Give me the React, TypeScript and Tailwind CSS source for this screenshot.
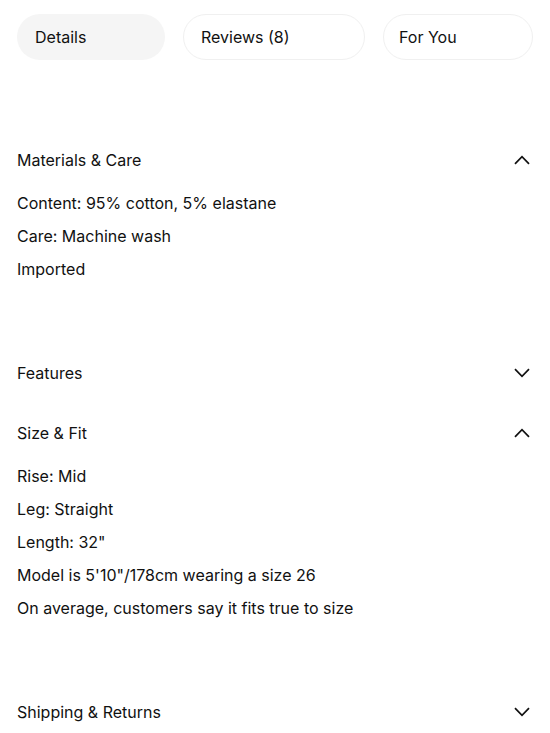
import React from "react";

const Chevron = ({ up }: { up?: boolean }) => (
  <svg width="16" height="10" viewBox="0 0 16 10" fill="none" className="shrink-0">
    {up ? (
      <path d="M1 8.8 L8 1.6 L15 8.8" stroke="#111" strokeWidth="1.7" />
    ) : (
      <path d="M1 1.2 L8 8.4 L15 1.2" stroke="#111" strokeWidth="1.7" />
    )}
  </svg>
);

const Section = ({ title, open, lines }: { title: string; open?: boolean; lines?: string[] }) => (
  <div className="mt-1">
    <div className="h-[56px] flex items-center justify-between pl-[17px] pr-[20px]">
      <span className="text-[16px]">{title}</span>
      <Chevron up={open} />
    </div>
    {open && lines && (
      <div className="pl-[17px] pb-[56px] -mt-[2px]">
        {lines.map((l) => (
          <div key={l} className="h-[33px] flex items-center text-[16px]">
            {l}
          </div>
        ))}
      </div>
    )}
  </div>
);

export default function App() {
  return (
    <div className="w-[550px] h-[733px] bg-white text-[#111] overflow-hidden" style={{ fontFamily: "Inter, 'Noto Sans', sans-serif" }}>
      <div className="flex pt-[14px] pl-[17px] gap-[18px]">
        <div className="w-[148px] h-[46px] rounded-full bg-[#f5f5f5] flex items-center pl-[18px] text-[16px]">Details</div>
        <div className="w-[182px] h-[46px] rounded-full border border-[#f0f0f0] flex items-center pl-[17px] text-[16px]">Reviews (8)</div>
        <div className="w-[150px] h-[46px] rounded-full border border-[#f0f0f0] flex items-center pl-[15px] text-[16px]">For You</div>
      </div>
      <div className="h-[68px]" />
      <Section title="Materials & Care" open lines={["Content: 95% cotton, 5% elastane", "Care: Machine wash", "Imported"]} />
      <Section title="Features" />
      <Section
        title="Size & Fit"
        open
        lines={["Rise: Mid", "Leg: Straight", 'Length: 32"', 'Model is 5\'10"/178cm wearing a size 26', "On average, customers say it fits true to size"]}
      />
      <Section title="Shipping & Returns" />
    </div>
  );
}
